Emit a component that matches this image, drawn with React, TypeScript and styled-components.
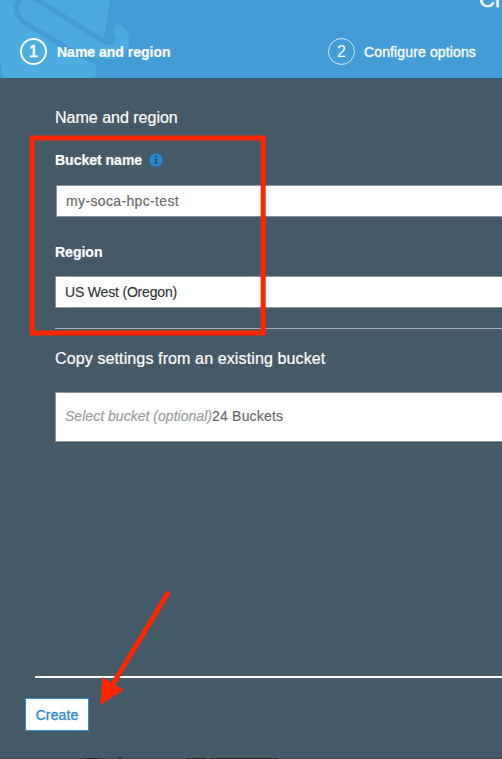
import React from 'react';
import styled, { createGlobalStyle } from 'styled-components';

const GlobalStyle = createGlobalStyle`
  *, *::before, *::after { box-sizing: border-box; }
  html, body { margin: 0; overflow: hidden; background: #3a4047; }
  body { font-family: "Liberation Sans", Arial, Helvetica, sans-serif; font-size: 14px; color: #fff; }
  h1, h2 { margin: 0; font-weight: 400; white-space: nowrap; }
`;

const Dialog = styled.main`
  position: relative;
  width: 502px;
  height: 759px;
  overflow: hidden;
  display: flex;
  flex-direction: column;
  background: #455a69;
`;

const Header = styled.header`
  position: relative;
  height: 78px;
  flex: none;
  display: flex;
  flex-direction: column;
  background: #449dd6;
  overflow: hidden;
`;

const BucketArt = styled.svg`
  position: absolute;
  left: 0;
  top: 0;
`;

const Title = styled.h1`
  position: relative;
  height: 38px;
  padding-left: 479px;
  margin-top: -12px;
  font-size: 22px;
  line-height: 23px;
  -webkit-text-stroke: 0.4px #fff;
`;

const Steps = styled.nav`
  position: relative;
  display: flex;
  padding-left: 20px;
  margin-top: 12px;
`;

const Step = styled.div<{ $current?: boolean }>`
  display: flex;
  align-items: center;
  flex: none;
  width: 308px;
  height: 27px;
  gap: ${p => (p.$current ? 10 : 9)}px;
  font-weight: ${p => (p.$current ? 700 : 400)};
  letter-spacing: ${p => (p.$current ? 0 : 0.13)}px;
  -webkit-text-stroke: ${p => (p.$current ? 0.2 : 0.35)}px #fff;
`;

const StepNumber = styled.span<{ $current?: boolean }>`
  width: 27px;
  height: 27px;
  flex: none;
  display: flex;
  align-items: center;
  justify-content: center;
  border: ${p => (p.$current ? 2 : 1)}px solid ${p => (p.$current ? '#fff' : '#d9edf8')};
  border-radius: 50%;
  font-size: 16px;
  font-weight: 400;
  letter-spacing: 0;
  -webkit-text-stroke: ${p => (p.$current ? 0.6 : 0)}px #fff;
`;

const Content = styled.section`
  height: 598px;
  flex: none;
  padding: 30px 0 0 55px;
  display: flex;
  flex-direction: column;
`;

const Heading = styled.h2<{ $tracking?: number }>`
  font-size: 16px;
  line-height: 20px;
  letter-spacing: ${p => p.$tracking ?? 0}px;
  -webkit-text-stroke: 0.2px #fff;
`;

const Label = styled.label`
  display: flex;
  align-items: center;
  gap: 7px;
  height: 20px;
  font-weight: 700;
  -webkit-text-stroke: 0.2px #fff;
`;

const Field = styled.div<{ $inset?: boolean; $tall?: boolean; $dark?: boolean; $tracking?: number }>`
  display: flex;
  align-items: center;
  flex: none;
  height: ${p => (p.$tall ? 50 : 32)}px;
  margin-left: ${p => (p.$inset ? 1 : 0)}px;
  padding-left: 9px;
  padding-bottom: ${p => (p.$tall ? 2 : 0)}px;
  border: 1px solid #8b9499;
  border-right: 0;
  background: #fff;
  color: ${p => (p.$dark ? '#2e3033' : '#666')};
  letter-spacing: ${p => p.$tracking ?? 0}px;
  white-space: nowrap;
  -webkit-text-stroke: 0.15px currentColor;
`;

const Group = styled.div<{ $top: number; $gap: number }>`
  display: flex;
  flex-direction: column;
  margin-top: ${p => p.$top}px;
  gap: ${p => p.$gap}px;
`;

const Placeholder = styled.em`
  color: #959b9e;
  letter-spacing: 0.03px;
`;

const Divider = styled.div`
  height: 1px;
  margin-top: 20px;
  background: #aab3b9;
`;

const Footer = styled.footer`
  flex: 1;
  display: flex;
  flex-direction: column;
  align-items: flex-start;
`;

const FooterRule = styled.div`
  height: 2px;
  align-self: stretch;
  margin-left: 35px;
  background: #fff;
`;

const CreateButton = styled.button`
  width: 64px;
  height: 33px;
  margin: 20px 0 0 25px;
  padding: 0;
  border: 1px solid #2b8fd8;
  background: #fff;
  color: #3089cb;
  font: 14px "Liberation Sans", Arial, sans-serif;
  letter-spacing: 0.12px;
  -webkit-text-stroke: 0.35px #3089cb;
`;

const BottomEdge = styled.div`
  height: 1px;
  width: 100%;
  margin-top: auto;
  background: linear-gradient(90deg, transparent 85px, #1c2229 85px 99px, transparent 99px 117px, #242b31 117px 123px, transparent 123px 187px, #262d33 187px 207px, transparent 207px 211px, #262d33 211px 277px, transparent 277px), #3c474f;
`;

const Annotations = styled.svg`
  position: absolute;
  left: 0;
  top: 0;
  pointer-events: none;
`;

const InfoIcon = () => (
  <svg width="14" height="14" viewBox="0 0 14 14">
    <circle cx="7" cy="7" r="6.6" fill="#2a8bd2" />
    <path d="M5.8 2.6h2.4v1.8H5.8zM5 5.6h3.2v4.1h.9v1.2H5V9.7h.9V6.8H5z" fill="#3d596c" />
  </svg>
);

export default function App() {
  return (
    <>
      <GlobalStyle />
      <Dialog>
        <Header>
          <BucketArt width="140" height="78" viewBox="0 0 140 78">
            <path d="M0 0H110L104 37L97 63L95 78H4Q2 72 0 61Z" fill="#4dacdf" />
            <path d="M96 39L103 43Q109 46 113 43Q118 39 113 33Q112 25 118 24Q124 24 128 34Q132 45 125 54Q118 62 105 59L92 54Z" fill="#4dacdf" />
            <path d="M23 -3Q13 5 18 15Q21 21 27 24L72 51Q84 58 97 62" fill="none" stroke="#449dd6" strokeWidth="5" />
            <path d="M32 -3L102 40Q108 44 113 41" fill="none" stroke="#449dd6" strokeWidth="5" />
          </BucketArt>
          <Title>Create bucket</Title>
          <Steps>
            <Step $current><StepNumber $current>1</StepNumber>Name and region</Step>
            <Step><StepNumber>2</StepNumber>Configure options</Step>
          </Steps>
        </Header>
        <Content>
          <Heading>Name and region</Heading>
          <Group $top={22} $gap={15}>
            <Label>Bucket name <InfoIcon /></Label>
            <Field $inset $tracking={0.36}>my-soca-hpc-test</Field>
          </Group>
          <Group $top={25} $gap={14}>
            <Label>Region</Label>
            <Field $dark $tracking={-0.18}>US West (Oregon)</Field>
          </Group>
          <Divider />
          <Group $top={20} $gap={23}>
            <Heading $tracking={0.12}>Copy settings from an existing bucket</Heading>
            <Field $tall $tracking={0.2}><Placeholder>Select bucket (optional)</Placeholder>24 Buckets</Field>
          </Group>
        </Content>
        <Footer>
          <FooterRule />
          <CreateButton>Create</CreateButton>
          <BottomEdge />
        </Footer>
        <Annotations width="502" height="759" viewBox="0 0 502 759">
          <rect x="32.2" y="138" width="231" height="195" fill="none" stroke="#ff2600" strokeWidth="5" />
          <path d="M168.5 592L113 684" stroke="#ff2600" strokeWidth="5" />
          <path d="M100.3 705L102.3 677L123.7 690Z" fill="#ff2600" />
        </Annotations>
      </Dialog>
    </>
  );
}
